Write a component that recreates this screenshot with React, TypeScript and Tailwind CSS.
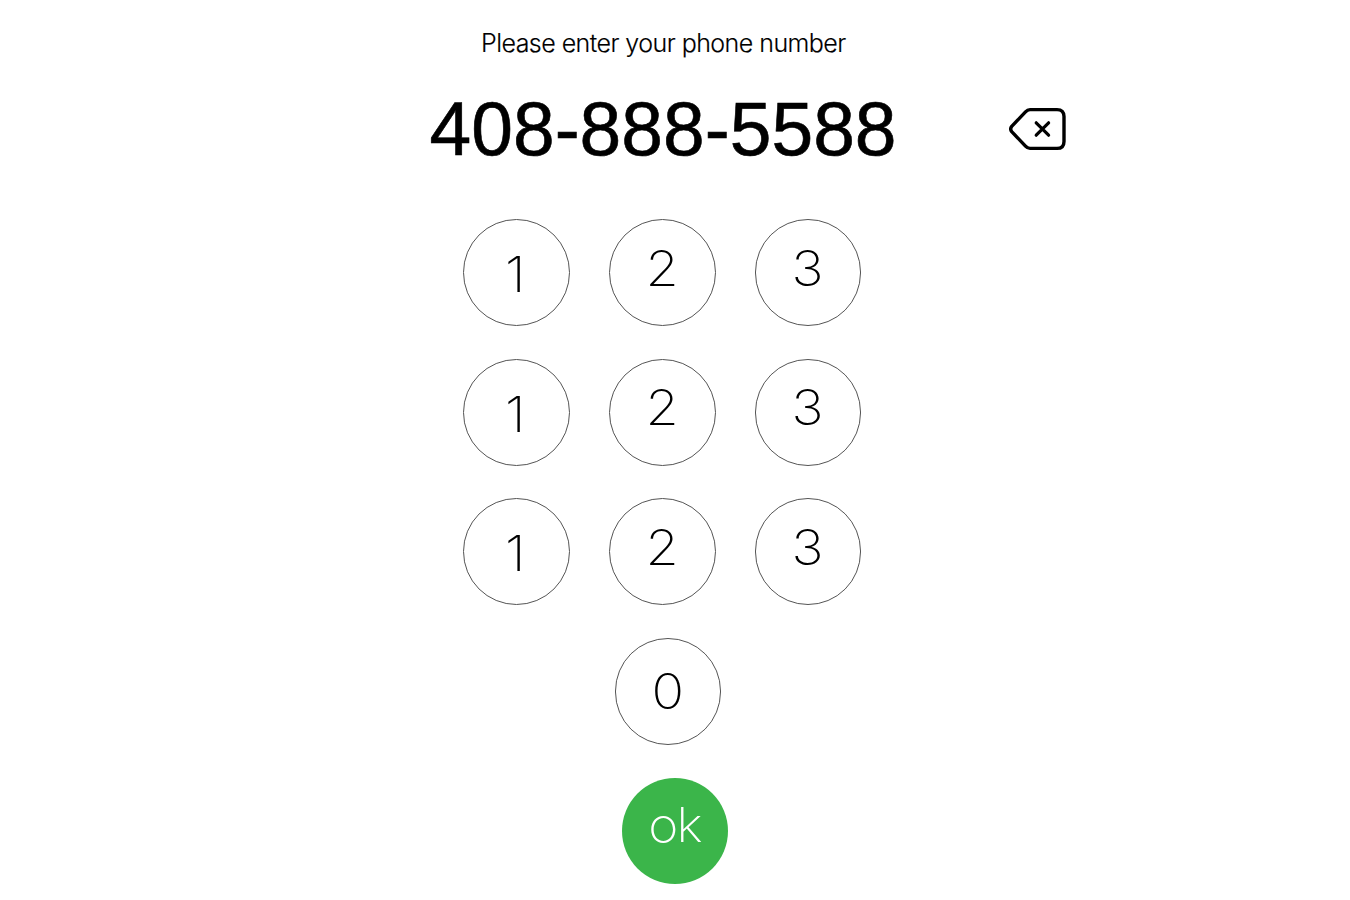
const DIGIT_ROWS = [0, 1, 2];

type KeyProps = { label: string; className?: string };

function Key({ label, className = "" }: KeyProps) {
  return (
    <button
      type="button"
      className={`flex h-[107px] items-start justify-center rounded-full border border-[#555] font-['Inter','Liberation_Sans',sans-serif] text-[49px] leading-[60px] font-extralight text-black ${className}`}
    >
      <span className="scale-x-110">{label}</span>
    </button>
  );
}

function BackspaceIcon() {
  return (
    <svg width="58" height="44" viewBox="0 0 58 44" fill="none" stroke="black" strokeLinecap="round" strokeLinejoin="round">
      <path d="M21 2.6H48Q55 2.6 55 9.6V34.4Q55 41.4 48 41.4H21Q18.5 41.4 16.5 39.2L2.7 24.6Q0.7 22 2.7 19.4L16.5 4.8Q18.5 2.6 21 2.6Z" strokeWidth="3.4" />
      <path d="M27.2 15.8 39.6 28.2M39.6 15.8 27.2 28.2" strokeWidth="3.2" />
    </svg>
  );
}

export default function App() {
  return (
    <main className="h-[900px] w-[1350px] overflow-hidden bg-white font-['Liberation_Sans',sans-serif] text-black">
      <h1 className="ml-[481px] pt-[28px] font-['Inter','Liberation_Sans',sans-serif] text-[25px] leading-[30px] font-light tracking-[-0.54px] word-spacing-normal whitespace-nowrap [-webkit-text-stroke:0.15px_black]">
        Please enter your phone number
      </h1>
      <div className="mt-[27px] flex h-[88px] items-center">
        <output className="ml-[429.5px] w-[466.5px] scale-y-101 text-[75px] leading-[86px] whitespace-nowrap [-webkit-text-stroke:0.6px_black]">
          408-888-5588
        </output>
        <button type="button" aria-label="Delete digit" className="ml-[113px]">
          <BackspaceIcon />
        </button>
      </div>
      <div className="ml-[463px] flex flex-col gap-[32.6px] pt-[46.3px]">
        {DIGIT_ROWS.map((row) => (
          <div key={row} className="flex gap-[39px]">
            <Key label="1" className="w-[107px] pt-[25px] pr-[2px]" />
            <Key label="2" className="w-[107px] pt-[18.6px]" />
            <Key label="3" className="w-[106px] pt-[18.6px]" />
          </div>
        ))}
        <Key label="0" className="ml-[152px] w-[106px] pt-[23px]" />
        <button
          type="button"
          className="ml-[159px] flex size-[106px] items-start justify-center rounded-full bg-[#3bb54a] pt-[17.5px] font-['Inter','Liberation_Sans',sans-serif] text-[48px] leading-[60px] font-extralight tracking-[-1.7px] text-white"
        >
          <span className="scale-x-107">ok</span>
        </button>
      </div>
    </main>
  );
}
